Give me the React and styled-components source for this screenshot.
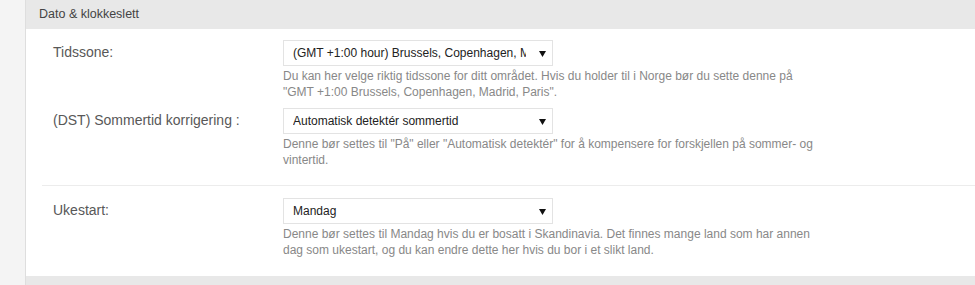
import React from 'react';
import styled, { createGlobalStyle } from 'styled-components';

const GlobalStyle = createGlobalStyle`
  html, body {
    margin: 0;
    padding: 0;
    background: #f5f5f5;
    font-family: "Liberation Sans", Arial, sans-serif;
  }
`;

const settings = [
  [
    {
      label: 'Tidssone:',
      value: '(GMT +1:00 hour) Brussels, Copenhagen, Madrid, Paris',
      help: 'Du kan her velge riktig tidssone for ditt området. Hvis du holder til i Norge bør du sette denne på "GMT +1:00 Brussels, Copenhagen, Madrid, Paris".',
    },
    {
      label: '(DST) Sommertid korrigering :',
      value: 'Automatisk detektér sommertid',
      help: 'Denne bør settes til "På" eller "Automatisk detektér" for å kompensere for forskjellen på sommer- og vintertid.',
    },
  ],
  [
    {
      label: 'Ukestart:',
      value: 'Mandag',
      help: 'Denne bør settes til Mandag hvis du er bosatt i Skandinavia. Det finnes mange land som har annen dag som ukestart, og du kan endre dette her hvis du bor i et slikt land.',
    },
  ],
];

const Arrow = () => (
  <ArrowIcon viewBox="0 0 7 6" width="7" height="6">
    <polygon points="0,0 7,0 3.5,6" fill="#111" />
  </ArrowIcon>
);

const SettingRow = ({ item }) => (
  <Row>
    <Label>{item.label}</Label>
    <Field>
      <SelectWrap>
        <Select defaultValue={item.value}>
          <option>{item.value}</option>
        </Select>
        <Arrow />
      </SelectWrap>
      <Help>{item.help}</Help>
    </Field>
  </Row>
);

const App = () => {
  return (
    <>
      <GlobalStyle />
      <Page>
        <Gutter />
        <Panel>
          <PanelHeader>Dato &amp; klokkeslett</PanelHeader>
          <PanelBody>
            {settings.map((group, i) => (
              <Group key={i}>
                {group.map((item) => (
                  <SettingRow key={item.label} item={item} />
                ))}
              </Group>
            ))}
          </PanelBody>
          <PanelHeader />
        </Panel>
      </Page>
    </>
  );
};

export default App;

const Page = styled.div`
  display: flex;
  min-height: 285px;
`;

const Gutter = styled.div`
  width: 25px;
  flex-shrink: 0;
  background: #f4f4f4;
`;

const Panel = styled.div`
  flex: 1;
  display: flex;
  flex-direction: column;
  border-left: 1px solid #dedede;
  background: #fff;
`;

const PanelHeader = styled.div`
  height: 29px;
  line-height: 29px;
  padding-left: 13px;
  background: #e8e8e8;
  color: #444;
  font-size: 12.5px;
`;

const PanelBody = styled.div`
  padding-left: 16px;
`;

const Group = styled.div`
  display: flex;
  flex-direction: column;
  gap: 8px;
  padding: 11px 0 17px 11px;

  & + & {
    border-top: 1px solid #ececec;
    padding-top: 12px;
    padding-bottom: 18px;
  }
`;

const Row = styled.div`
  display: grid;
  grid-template-columns: 230px 1fr;
`;

const Label = styled.div`
  padding-top: 3px;
  font-size: 14px;
  line-height: 18px;
  color: #585858;
`;

const Field = styled.div`
  display: flex;
  flex-direction: column;
`;

const SelectWrap = styled.div`
  position: relative;
  width: 270px;
`;

const Select = styled.select`
  appearance: none;
  display: block;
  width: 270px;
  height: 26px;
  padding: 0 26px 0 9px;
  border: 1px solid #e3e3e3;
  border-radius: 0;
  background: #fff;
  color: #222;
  font-family: "Liberation Sans", Arial, sans-serif;
  font-size: 12px;
  outline: none;
`;

const ArrowIcon = styled.svg`
  position: absolute;
  right: 7px;
  top: 11px;
  pointer-events: none;
`;

const Help = styled.p`
  margin: 2px 0 0;
  max-width: 535px;
  font-size: 12px;
  line-height: 16px;
  color: #888;
`;
